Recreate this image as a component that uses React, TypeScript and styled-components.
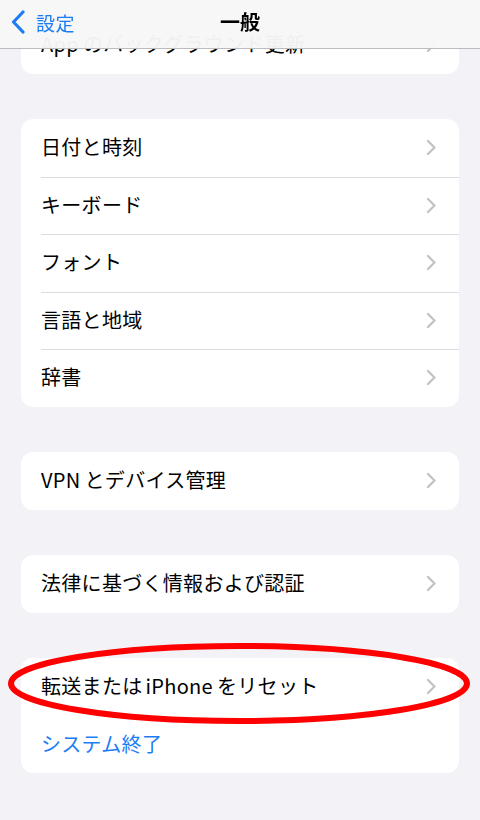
import { FC, ReactNode } from "react";
import styled, { createGlobalStyle } from "styled-components";

const GlobalStyle = createGlobalStyle`
  html, body {
    margin: 0;
    padding: 0;
    background: #f2f2f7;
    font-family: "Noto Sans CJK JP", "Noto Sans", sans-serif;
    -webkit-font-smoothing: antialiased;
  }
`;

const blue = "#1c7cf4";

const Page = styled.div`
  width: 480px;
  min-height: 820px;
  background: #f2f2f7;
  overflow: hidden;
`;

const NavBar = styled.header`
  position: fixed;
  top: 0;
  left: 0;
  right: 0;
  height: 48px;
  z-index: 10;
  display: flex;
  align-items: center;
  justify-content: center;
  background: rgba(247, 247, 247, 0.97);
  border-bottom: 1px solid #bcbcbf;
`;

const BackButton = styled.button`
  position: absolute;
  left: 10px;
  top: 0;
  height: 44px;
  display: flex;
  align-items: center;
  gap: 10px;
  padding: 0;
  border: none;
  background: none;
  color: ${blue};
  font-family: inherit;
  font-size: 19px;
  letter-spacing: 0.5px;
  cursor: pointer;
`;

const Title = styled.h1`
  margin: 0 0 6px;
  font-size: 20px;
  font-weight: 700;
  color: #000;
`;

const List = styled.main`
  display: flex;
  flex-direction: column;
  gap: 45.5px;
  padding: 16px 21px 48px;
`;

const Group = styled.section`
  position: relative;
  background: #fff;
  border-radius: 12px;
`;

const Row = styled.div<{ $danger?: boolean }>`
  position: relative;
  height: 57.5px;
  display: flex;
  align-items: center;
  justify-content: space-between;
  padding: 0 22px 0 20px;
  font-size: 20px;
  letter-spacing: 0.3px;
  color: ${(p) => (p.$danger ? blue : "#000")};

  & + &::before {
    content: "";
    position: absolute;
    top: 0;
    left: 20px;
    right: 0;
    height: 1px;
    background: #dcdcde;
  }
`;

const Label = styled.span`
  margin-top: -2px;
`;

// iOS puts a little air between Latin words and kana
const Latin = styled.span<{ $inside?: boolean }>`
  margin: 0 4px 0 ${(p) => (p.$inside ? "3px" : "0")};
`;

const Chevron: FC = () => (
  <svg width="11" height="17" viewBox="0 0 11 17" fill="none">
    <path d="M2 2l6.5 6.5L2 15" stroke="#c4c4c7" strokeWidth="2.4" strokeLinecap="round" strokeLinejoin="round" />
  </svg>
);

const BackChevron: FC = () => (
  <svg width="16" height="24" viewBox="0 0 16 24" fill="none">
    <path d="M13 2L3.5 12 13 22" stroke={blue} strokeWidth="3.2" strokeLinecap="round" strokeLinejoin="round" />
  </svg>
);

const Highlight = styled.svg`
  position: absolute;
  left: -13px;
  top: -15px;
  width: 462px;
  height: 81px;
  overflow: visible;
  pointer-events: none;
`;

type Item = { key: string; label: ReactNode };

const groups: Item[][] = [
  [{ key: "bg", label: <><Latin>App</Latin>のバックグラウンド更新</> }],
  [
    { key: "date", label: "日付と時刻" },
    { key: "kb", label: "キーボード" },
    { key: "font", label: "フォント" },
    { key: "lang", label: "言語と地域" },
    { key: "dict", label: "辞書" },
  ],
  [{ key: "vpn", label: <><Latin>VPN</Latin>とデバイス管理</> }],
  [{ key: "legal", label: "法律に基づく情報および認証" }],
];

const App: FC = () => {
  return (
    <Page>
      <GlobalStyle />
      <NavBar>
        <BackButton>
          <BackChevron />
          設定
        </BackButton>
        <Title>一般</Title>
      </NavBar>
      <List>
        {groups.map((items, i) => (
          <Group key={i}>
            {items.map((item) => (
              <Row key={item.key}>
                <Label>{item.label}</Label>
                <Chevron />
              </Row>
            ))}
          </Group>
        ))}
        <Group>
          <Row>
            <Label>
              転送または<Latin $inside>iPhone</Latin>をリセット
            </Label>
            <Chevron />
          </Row>
          <Row $danger>
            <Label>システム終了</Label>
          </Row>
          <Highlight viewBox="0 0 462 81">
            <ellipse cx="231" cy="40.5" rx="228" ry="37.5" stroke="#ff0000" strokeWidth="6" fill="none" />
          </Highlight>
        </Group>
      </List>
    </Page>
  );
};

export default App;
